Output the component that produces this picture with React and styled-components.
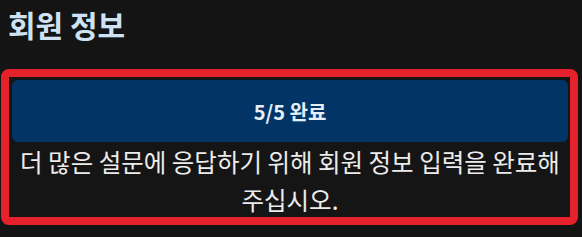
import React from 'react';
import styled, { createGlobalStyle } from 'styled-components';

const GlobalStyle = createGlobalStyle`
  html, body {
    margin: 0;
    padding: 0;
    background-color: #141414;
  }
  body {
    font-family: "Noto Sans CJK KR", "Noto Sans", sans-serif;
  }
`

const Page = styled.div`
  width: 582px;
  height: 237px;
  box-sizing: border-box;
  padding: 5px 4px 0 1px;
  background-color: #141414;
`

const Title = styled.h2`
  margin: 0 0 0 7px;
  color: #cfe2f3;
  font-size: 30px;
  font-weight: 700;
  line-height: 38px;
  height: 64px;
`

const Highlight = styled.section`
  box-sizing: border-box;
  width: 577px;
  height: 156px;
  border: 8px solid #e5222b;
  border-radius: 8px;
  padding: 3px 2px 0 3px;
  background-color: #151515;
  display: flex;
  flex-direction: column;
  overflow: hidden;
`

const StatusBar = styled.div`
  flex: none;
  height: 62px;
  background-color: #023566;
  border-radius: 6px;

  display: flex;
  justify-content: center;
  align-items: center;

  color: #e6eef7;
  font-size: 20px;
  font-weight: 700;
`

const Message = styled.p`
  margin: 1px 0 0 0;
  color: #ececec;
  font-size: 24.5px;
  font-weight: 400;
  line-height: 38px;
  text-align: center;
  white-space: nowrap;
`

const MemberInfo = () => {
  return (
    <Page>
      <Title>회원 정보</Title>
      <Highlight>
        <StatusBar>5/5 완료</StatusBar>
        <Message>
          더 많은 설문에 응답하기 위해 회원 정보 입력을 완료해
          <br />
          주십시오.
        </Message>
      </Highlight>
    </Page>
  )
}

export default function App() {
  return (
    <>
      <GlobalStyle />
      <MemberInfo />
    </>
  )
}
